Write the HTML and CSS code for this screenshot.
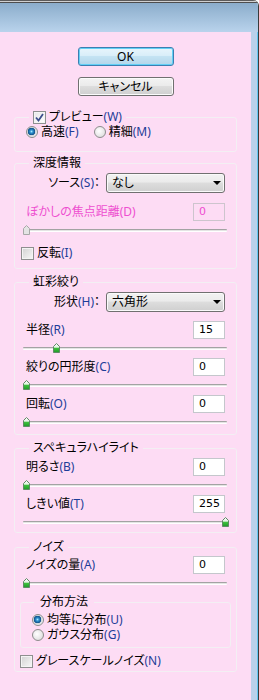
FILE: index.html
```html
<!DOCTYPE html>
<html>
<head>
    <title>被写界深度ぼかし</title>
    <link rel="stylesheet" href="styles.css">
</head>
<body>
    <div class="window">
        <div class="titlebar"></div>
        <div class="frame">
            <div class="panel">

                <div class="buttons">
                    <button class="btn btn-default">OK</button>
                    <button class="btn">キャンセル</button>
                </div>

                <!-- プレビュー -->
                <fieldset class="group group-preview">
                    <legend class="check-legend">
                        <span class="check checked"><svg width="9" height="9" viewBox="0 0 9 9"><path d="M1 4.5 L3.5 7.5 L8 1" fill="none" stroke="#3d4f8c" stroke-width="1.8"/></svg></span>
                        プレビュー<span class="key">(W)</span>
                    </legend>
                    <div class="radio-row">
                        <div class="option"><span class="radio on"></span>高速<span class="key">(F)</span></div>
                        <div class="option"><span class="radio"></span>精細<span class="key">(M)</span></div>
                    </div>
                </fieldset>

                <!-- 深度情報 -->
                <fieldset class="group group-depth">
                    <legend>深度情報</legend>
                    <div class="select-row">
                        <label class="select-label">ソース<span class="key">(S)</span>：</label>
                        <div class="select">なし<span class="arrow"></span></div>
                    </div>
                    <div class="value-row disabled">
                        <label>ぼかしの焦点距離<span class="key">(D)</span></label>
                        <div class="value">0</div>
                    </div>
                    <div class="slider"><span class="thumb" style="left: 0px"><svg width="7" height="10" viewBox="0 0 7 10"><path d="M3.5 0.5 L6.5 3.5 L6.5 9.5 L0.5 9.5 L0.5 3.5 Z" fill="#e4e4e4" stroke="#a8a8a8"/></svg></span></div>
                    <div class="check-row flip">
                        <span class="check"></span>反転<span class="key">(I)</span>
                    </div>
                </fieldset>

                <!-- 虹彩絞り -->
                <fieldset class="group group-iris">
                    <legend>虹彩絞り</legend>
                    <div class="select-row">
                        <label class="select-label">形状<span class="key">(H)</span>：</label>
                        <div class="select">六角形<span class="arrow"></span></div>
                    </div>
                    <div class="value-row">
                        <label>半径<span class="key">(R)</span></label>
                        <div class="value">15</div>
                    </div>
                    <div class="slider"><span class="thumb" style="left: 30px"><svg width="7" height="10" viewBox="0 0 7 10"><use href="#thumb"/></svg></span></div>
                    <div class="value-row">
                        <label>絞りの円形度<span class="key">(C)</span></label>
                        <div class="value">0</div>
                    </div>
                    <div class="slider"><span class="thumb" style="left: 0px"><svg width="7" height="10" viewBox="0 0 7 10"><use href="#thumb"/></svg></span></div>
                    <div class="value-row">
                        <label>回転<span class="key">(O)</span></label>
                        <div class="value">0</div>
                    </div>
                    <div class="slider last"><span class="thumb" style="left: 0px"><svg width="7" height="10" viewBox="0 0 7 10"><use href="#thumb"/></svg></span></div>
                </fieldset>

                <!-- スペキュラハイライト -->
                <fieldset class="group group-specular">
                    <legend>スペキュラハイライト</legend>
                    <div class="value-row">
                        <label>明るさ<span class="key">(B)</span></label>
                        <div class="value">0</div>
                    </div>
                    <div class="slider"><span class="thumb" style="left: 0px"><svg width="7" height="10" viewBox="0 0 7 10"><use href="#thumb"/></svg></span></div>
                    <div class="value-row">
                        <label>しきい値<span class="key">(T)</span></label>
                        <div class="value">255</div>
                    </div>
                    <div class="slider last"><span class="thumb" style="left: 199px"><svg width="7" height="10" viewBox="0 0 7 10"><use href="#thumb"/></svg></span></div>
                </fieldset>

                <!-- ノイズ -->
                <fieldset class="group group-noise">
                    <legend>ノイズ</legend>
                    <div class="value-row">
                        <label>ノイズの量<span class="key">(A)</span></label>
                        <div class="value">0</div>
                    </div>
                    <div class="slider"><span class="thumb" style="left: 0px"><svg width="7" height="10" viewBox="0 0 7 10"><use href="#thumb"/></svg></span></div>

                    <fieldset class="group group-dist">
                        <legend>分布方法</legend>
                        <div class="option"><span class="radio on"></span>均等に分布<span class="key">(U)</span></div>
                        <div class="option"><span class="radio"></span>ガウス分布<span class="key">(G)</span></div>
                    </fieldset>

                    <div class="check-row gray">
                        <span class="check"></span>グレースケールノイズ<span class="key">(N)</span>
                    </div>
                </fieldset>

            </div>
            <div class="edge"></div>
        </div>
    </div>

    <svg class="defs" width="0" height="0">
        <defs>
            <linearGradient id="thumbFill" x1="0" y1="0" x2="0" y2="1">
                <stop offset="0" stop-color="#ffffff"/>
                <stop offset="0.4" stop-color="#e2f3e2"/>
                <stop offset="0.55" stop-color="#3cbf3c"/>
                <stop offset="1" stop-color="#1f9a2a"/>
            </linearGradient>
            <path id="thumb" d="M3.5 0.5 L6.5 3.5 L6.5 9.5 L0.5 9.5 L0.5 3.5 Z" fill="url(#thumbFill)" stroke="#5f8a66"/>
        </defs>
    </svg>
</body>
</html>
```

FILE: styles.css
```css
body {
    margin: 0;
    font-family: "Noto Sans", "Noto Sans CJK JP", sans-serif;
    font-size: 12px;
    line-height: 14px;
    color: #000;
    font-feature-settings: "palt";
}

.defs {
    position: absolute;
}

.window {
    width: 259px;
    height: 700px;
    box-sizing: border-box;
    border-right: 1px solid #3a3a3a;
    border-top-right-radius: 6px;
    overflow: hidden;
    display: flex;
    flex-direction: column;
}

.titlebar {
    height: 32px;
    flex-shrink: 0;
    background: linear-gradient(#5c5c5c 0 1px, #d0d0d0 1px 2px, #4e4e4e 2px 3px, #8badcb 3px, #b9d3ec);
}

.frame {
    flex: 1;
    display: flex;
}

.panel {
    width: 251px;
    background-color: #fddcf4;
    padding-top: 15px;
    box-sizing: border-box;
}

.edge {
    flex: 1;
    background-color: #b9d1ea;
    border-right: 1px solid #63c6f0;
}

/* buttons */
.buttons {
    display: flex;
    flex-direction: column;
    align-items: center;
    gap: 11px;
}

.btn {
    width: 96px;
    height: 19px;
    padding: 0;
    font: inherit;
    font-size: 12px;
    line-height: 15px;
    color: #000;
    border: 1px solid #707070;
    border-radius: 3px;
    background: linear-gradient(#f3f3f3, #ebebeb 45%, #dddddd 50%, #cfcfcf);
    box-shadow: inset 0 0 0 1px #fbfbfb;
}

.btn-default {
    border-color: #3c7fb1;
    background: linear-gradient(#e8f5fc, #d9eef9 45%, #c4e3f3 50%, #b3d6ea);
    box-shadow: inset 0 0 0 1px #62d0f6;
}

/* group boxes */
.group {
    margin: 0 14px;
    padding: 0 11px;
    border: 1px solid #f3eff3;
    border-radius: 3px;
    min-width: 0;
}

.group legend {
    margin-left: 3px;
    padding: 0 4px;
    line-height: 14px;
}

.group-preview {
    margin-top: 14px;
    padding-bottom: 13px;
}

.group-depth {
    margin-top: 4px;
    padding-top: 3px;
    padding-bottom: 8px;
}

.group-iris {
    margin-top: 6px;
    padding-top: 3px;
    padding-bottom: 2px;
}

.group-specular {
    margin-top: 6px;
    padding-top: 3px;
    padding-bottom: 0;
}

.group-noise {
    margin-top: 7px;
    padding-top: 2px;
    padding-bottom: 3px;
}

.group-dist {
    margin: 2px -6px 0;
    padding: 3px 10px 5px;
}

.group-dist legend {
    padding: 0 6px;
}

.check-legend {
    display: flex;
    align-items: center;
}

.key {
    color: #1d3d98;
}

/* check boxes and radios */
.check {
    width: 11px;
    height: 11px;
    border: 1px solid #8e8f8f;
    background: linear-gradient(135deg, #d2d2d2, #f8f8f8);
    box-shadow: inset 0 0 0 1px #f4f4f4;
    display: flex;
    align-items: center;
    justify-content: center;
    margin-right: 3px;
    flex-shrink: 0;
}

.check.checked {
    background: linear-gradient(135deg, #e6e6e6, #ffffff);
}

.radio {
    width: 10px;
    height: 10px;
    border: 1px solid #8c8c8c;
    border-radius: 50%;
    background: radial-gradient(circle at 40% 40%, #ffffff, #d6d6d6);
    margin-right: 3px;
    flex-shrink: 0;
}

.radio.on {
    background: radial-gradient(circle at 45% 45%, #a8e6ff 0, #2f93cf 1.5px, #0e4f8a 3.5px, #cfd6dc 4px, #f6f6f6 6px);
}

.radio-row {
    display: flex;
    gap: 15px;
    height: 14px;
}

.option {
    display: flex;
    align-items: center;
    height: 15px;
}

.group-dist .option {
    margin-left: 1px;
}

.check-row {
    display: flex;
    align-items: center;
    height: 14px;
}

.check-row.flip {
    margin-top: 6px;
    margin-left: -5px;
}

.check-row.gray {
    margin-top: 6px;
    margin-left: -6px;
}

/* select boxes */
.select-row {
    display: flex;
    align-items: center;
}

.select-label {
    width: 74px;
    margin-right: 6px;
    text-align: right;
}

.select {
    flex: 1;
    height: 18px;
    line-height: 18px;
    padding-left: 5px;
    border: 1px solid #707070;
    border-radius: 3px;
    background: linear-gradient(#f2f2f2, #ebebeb 45%, #dddddd 50%, #cfcfcf);
    box-shadow: inset 0 0 0 1px #fafafa;
    display: flex;
    justify-content: space-between;
    align-items: center;
}

.arrow {
    width: 0;
    height: 0;
    margin-right: 3px;
    border-left: 4px solid transparent;
    border-right: 4px solid transparent;
    border-top: 4px solid #000;
}

/* value rows and sliders */
.value-row {
    display: flex;
    justify-content: space-between;
    align-items: center;
    margin-top: 9px;
}

.select-row + .value-row {
    margin-top: 9px;
}

.slider + .value-row,
.value-row:first-of-type {
    margin-top: 0;
}

.group-depth .value-row {
    margin-top: 10px;
}

.value {
    width: 25px;
    height: 16px;
    line-height: 16px;
    padding-left: 5px;
    border: 1px solid #c4c7cc;
    background-color: #fff;
    font-family: "DejaVu Sans", sans-serif;
    font-size: 11px;
}

.disabled {
    color: #ee4fd0;
}

.disabled .key {
    color: #ee4fd0;
}

.disabled .value {
    background-color: transparent;
    border-color: #cdc5cd;
    color: #ee4fd0;
}

.slider {
    position: relative;
    height: 19px;
    margin: 0 -2px 0 -3px;
}

.slider::before {
    content: "";
    position: absolute;
    left: 0;
    right: 0;
    top: 8px;
    height: 1px;
    border-top: 1px solid #a3a3a3;
    border-bottom: 1px solid #ffffff;
    background-color: #e4e4e4;
    border-radius: 1px;
}

.thumb {
    position: absolute;
    top: 4px;
    width: 7px;
    height: 10px;
}

.thumb svg {
    display: block;
}
```
